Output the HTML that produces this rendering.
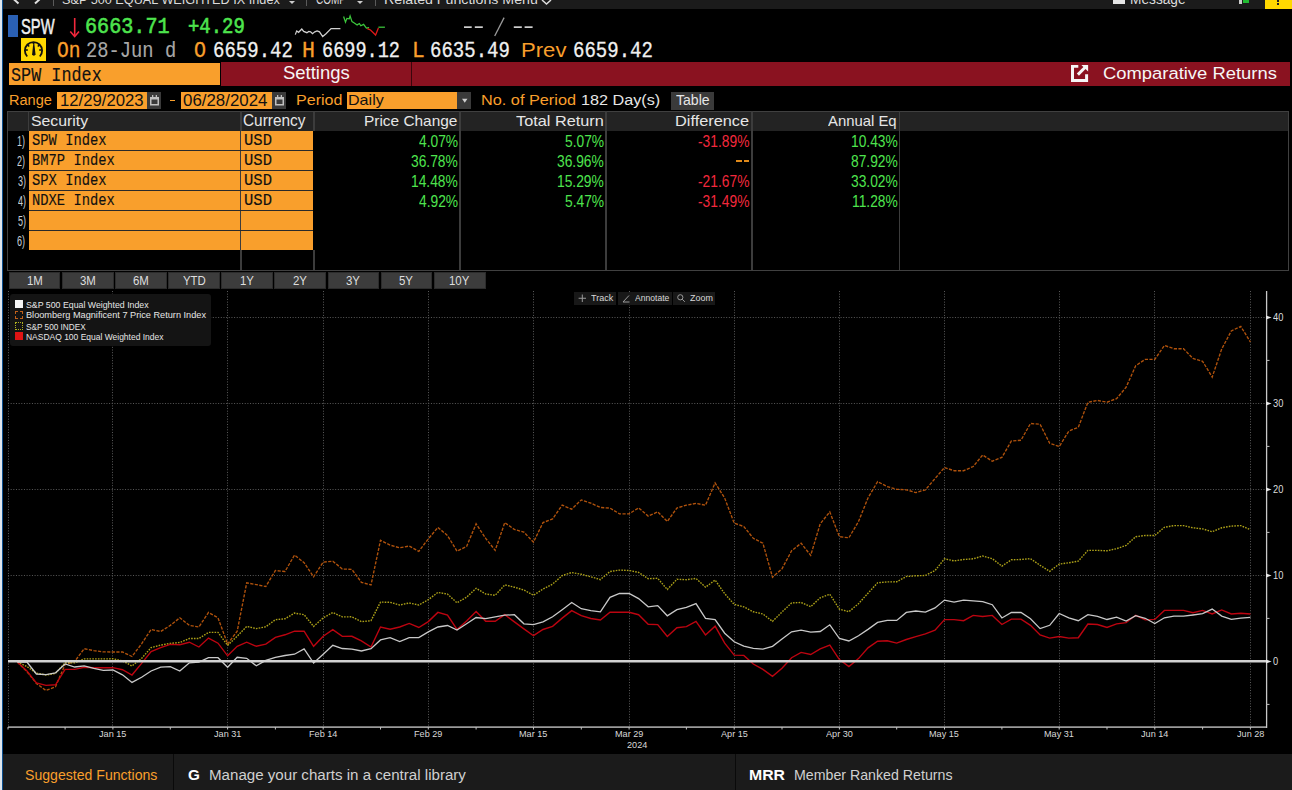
<!DOCTYPE html><html><head><meta charset="utf-8"><style>*{margin:0;padding:0;box-sizing:border-box}
html,body{width:1292px;height:790px;overflow:hidden;background:#000}
.a{position:absolute;white-space:nowrap}
.t{position:absolute;white-space:nowrap;transform-origin:0 0}
</style></head><body>
<div class="a" style="left:0px;top:0px;width:2px;height:790px;background:#dfe6ee;"></div>
<div class="a" style="left:2px;top:0px;width:1px;height:790px;background:#0c4f8f;"></div>
<div class="a" style="left:3px;top:0px;width:1289px;height:9px;background:#1b1b1b;"></div>
<svg class="a" style="left:0;top:0" width="60" height="9"><path d="M18.5,-7 L13,-1.5 L18.5,3.5" fill="none" stroke="#e0e0e0" stroke-width="2"/><path d="M35,-7 L40.5,-1.5 L35,3.5" fill="none" stroke="#e0e0e0" stroke-width="2"/></svg>
<div class="a" style="left:53px;top:0px;width:1px;height:6px;background:#5a5a5a;"></div>
<div class="a" style="left:306px;top:0px;width:1px;height:6px;background:#5a5a5a;"></div>
<div class="a" style="left:375px;top:0px;width:1px;height:6px;background:#5a5a5a;"></div>
<div class="t" style="left:62.40px;top:-7px;font:400 13.62px/13.62px 'Liberation Sans';color:#dcdcdc;transform:scaleX(0.9318);">S&amp;P 500 EQUAL WEIGHTED IX Index</div>
<div class="t" style="left:315.53px;top:-8px;font:400 14.22px/14.22px 'Liberation Sans';color:#dcdcdc;transform:scaleX(0.7004);">COMP</div>
<div class="t" style="left:383.89px;top:-7px;font:400 13.62px/13.62px 'Liberation Sans';color:#dcdcdc;transform:scaleX(1.0427);">Related Functions Menu</div>
<div class="t" style="left:1129.93px;top:-8px;font:400 14.22px/14.22px 'Liberation Sans';color:#dcdcdc;transform:scaleX(0.9639);">Message</div>
<svg class="a" style="left:0;top:0" width="1292" height="9"><path d="M289,1 L295,1 L292,4 Z" fill="#ccc"/><path d="M357,1 L363,1 L360,4 Z" fill="#ccc"/><path d="M542,0 L546.5,4 L551,0" fill="none" stroke="#ddd" stroke-width="1.5"/></svg>
<div class="a" style="left:1113px;top:0px;width:12px;height:4px;background:#e6e6e6;"></div>
<div class="a" style="left:1239px;top:0px;width:3px;height:3.5px;background:#ccc;"></div>
<div class="a" style="left:1243px;top:0px;width:6px;height:3px;background:#22bb33;"></div>
<div class="a" style="left:1265px;top:0px;width:27px;height:9px;background:#ffd800;"></div>
<div class="a" style="left:1276.5px;top:0px;width:2.5px;height:2px;background:#222;"></div>
<div class="a" style="left:1276.5px;top:3px;width:2.5px;height:1.5px;background:#222;"></div>
<div class="a" style="left:8px;top:15px;width:10px;height:22px;background:#2a60b4;"></div>
<div class="t" style="left:20.74px;top:15px;font:400 22.9px/22.9px 'Liberation Sans';color:#f0f0f0;transform:scaleX(0.6447);-webkit-text-stroke:0.5px #f0f0f0">SPW</div>
<svg class="a" style="left:60px;top:12px" width="25" height="30"><path d="M14.7,6 V23.5" stroke="#f2283c" stroke-width="1.6"/><path d="M10.3,19.5 L14.7,24.5 L19,19.5" fill="none" stroke="#f2283c" stroke-width="1.6"/></svg>
<div class="t" style="left:85.34px;top:16px;font:400 22.92px/22.92px 'Liberation Mono';color:#4ee44e;transform:scaleX(0.8788);-webkit-text-stroke:0.6px #4ee44e">6663.71</div>
<div class="t" style="left:188.31px;top:17px;font:400 21.88px/21.88px 'Liberation Mono';color:#4ee44e;transform:scaleX(0.8651);-webkit-text-stroke:0.6px #4ee44e">+4.29</div>
<svg class="a" style="left:455px;top:12px" width="90" height="28"><g fill="#cfcfcf"><rect x="9" y="14.3" width="7.7" height="1.7"/><rect x="19.8" y="14.3" width="8" height="1.7"/><rect x="58.8" y="14.3" width="8" height="1.7"/><rect x="69.6" y="14.3" width="8" height="1.7"/></g><path d="M39.7,24 L49.1,5.6" stroke="#9a9a9a" stroke-width="1.3"/></svg>
<svg class="a" style="left:0;top:0" width="400" height="40">
<polyline points="295.3,34.6 296.7,30.9 298.6,32.3 301.8,29.0 303.7,31.4 306.9,32.7 308.8,31.4 310.6,31.8 312.5,33.7 314.8,31.8 317.1,30.9 319.5,31.8 322.7,36.5 326.0,33.7 331.1,28.6 340.4,28.6" fill="none" stroke="#d0d0d0" stroke-width="1.25"/>
<polyline points="343.6,16.5 345.5,22.1 346.9,18.4 349.2,18.8 350.1,16.0 352.0,21.6 354.3,23.0 357.1,24.9 359.4,23.5 360.8,25.8 363.6,24.4 366.4,28.1 369.1,27.6" fill="none" stroke="#3cc83c" stroke-width="1.25"/>
<polyline points="367.3,28.6 370.5,30.0 373.8,33.2 375.6,35.1 378.4,28.1" fill="none" stroke="#e01818" stroke-width="1.3"/>
<polyline points="378.4,27.2 384.9,27.2" fill="none" stroke="#3cc83c" stroke-width="1.25"/>
</svg>
<div class="a" style="left:21px;top:38px;width:25px;height:22.5px;background:#ffd800;"></div>
<svg class="a" style="left:21px;top:38px" width="25" height="23"><path d="M6.2,18.5 A8.6,8.6 0 1 1 18.8,18.5" fill="none" stroke="#111" stroke-width="1.8"/><g stroke="#111" stroke-width="1.6"><path d="M4.3,12 H6.8"/><path d="M18.2,12 H20.7"/><path d="M6.5,6.8 L8.2,8.5"/><path d="M18.5,6.8 L16.8,8.5"/><path d="M12.5,4 V6"/></g><path d="M12.3,5.6 L13.3,5.6 L14.5,16.3 A1.75,1.75 0 0 1 11.1,16.3 Z" fill="#111"/></svg>
<div class="t" style="left:56.68px;top:41px;font:400 21.88px/21.88px 'Liberation Mono';color:#f99f2c;transform:scaleX(0.8937);-webkit-text-stroke:0.3px #f99f2c">On</div>
<div class="t" style="left:85.83px;top:41px;font:400 21.88px/21.88px 'Liberation Mono';color:#a8a8a8;transform:scaleX(0.8584);-webkit-text-stroke:0.15px #a8a8a8">28-Jun d</div>
<div class="t" style="left:193.66px;top:41px;font:400 22.18px/22.18px 'Liberation Mono';color:#f99f2c;transform:scaleX(0.9008);-webkit-text-stroke:0.3px #f99f2c">O</div>
<div class="t" style="left:212.61px;top:41px;font:400 22.03px/22.03px 'Liberation Mono';color:#f0f0f0;transform:scaleX(0.8635);-webkit-text-stroke:0.3px #f0f0f0">6659.42</div>
<div class="t" style="left:302.01px;top:41px;font:400 21.88px/21.88px 'Liberation Mono';color:#f99f2c;transform:scaleX(0.9885);-webkit-text-stroke:0.3px #f99f2c">H</div>
<div class="t" style="left:322.24px;top:41px;font:400 22.03px/22.03px 'Liberation Mono';color:#f0f0f0;transform:scaleX(0.8434);-webkit-text-stroke:0.3px #f0f0f0">6699.12</div>
<div class="t" style="left:411.68px;top:41px;font:400 21.88px/21.88px 'Liberation Mono';color:#f99f2c;transform:scaleX(0.9716);-webkit-text-stroke:0.3px #f99f2c">L</div>
<div class="t" style="left:430.01px;top:41px;font:400 22.03px/22.03px 'Liberation Mono';color:#f0f0f0;transform:scaleX(0.8635);-webkit-text-stroke:0.3px #f0f0f0">6635.49</div>
<div class="t" style="left:520.57px;top:40px;font:400 20.91px/20.91px 'Liberation Sans';color:#f99f2c;transform:scaleX(1.0567);">Prev</div>
<div class="t" style="left:572.81px;top:41px;font:400 22.03px/22.03px 'Liberation Mono';color:#f0f0f0;transform:scaleX(0.8646);-webkit-text-stroke:0.3px #f0f0f0">6659.42</div>
<div class="a" style="left:9px;top:63px;width:210.5px;height:21.6px;background:#f99f2c;"></div>
<div class="t" style="left:11.47px;top:66px;font:400 20.24px/20.24px 'Liberation Mono';color:#111;transform:scaleX(0.8302);-webkit-text-stroke:0.15px #111">SPW Index</div>
<div class="a" style="left:221px;top:62px;width:1068.5px;height:23.6px;background:#8a1220;"></div>
<div class="a" style="left:410.5px;top:62px;width:1.5px;height:23.6px;background:#3a060c;"></div>
<div class="t" style="left:282.92px;top:65px;font:400 17.84px/17.84px 'Liberation Sans';color:#f6f6f6;transform:scaleX(1.0357);">Settings</div>
<div class="t" style="left:1103.14px;top:65px;font:400 17.16px/17.16px 'Liberation Sans';color:#f6f6f6;transform:scaleX(1.0724);">Comparative Returns</div>
<svg class="a" style="left:1071px;top:65px" width="19" height="18"><path d="M7.3,1.25 H1.5 V15.4 H15.6 V9.3" fill="none" stroke="#f6f6f6" stroke-width="3" stroke-linejoin="miter"/><path d="M6.9,9.6 L14,2.5" stroke="#f6f6f6" stroke-width="3"/><path d="M10.1,-0.25 L17.1,-0.25 L17.1,6.6 Z" fill="#f6f6f6"/></svg>
<div class="t" style="left:9.46px;top:93px;font:400 14.93px/14.93px 'Liberation Sans';color:#f99f2c;transform:scaleX(0.9755);">Range</div>
<div class="a" style="left:57px;top:92px;width:90.2px;height:16.8px;background:#f99f2c;"></div>
<div class="t" style="left:59.65px;top:93px;font:400 16.78px/16.78px 'Liberation Sans';color:#111;transform:scaleX(0.9968);">12/29/2023</div>
<div class="a" style="left:147.2px;top:92px;width:14.1px;height:16.8px;background:#3a3a3a;"></div>
<div class="a" style="left:170.3px;top:99.8px;width:5.1px;height:1.6px;background:#f99f2c;"></div>
<div class="a" style="left:181.4px;top:92px;width:90.6px;height:16.8px;background:#f99f2c;"></div>
<div class="t" style="left:183.27px;top:93px;font:400 16.78px/16.78px 'Liberation Sans';color:#111;transform:scaleX(1.0066);">06/28/2024</div>
<div class="a" style="left:272px;top:92px;width:13.5px;height:16.8px;background:#3a3a3a;"></div>
<svg class="a" style="left:149.9px;top:94.5px" width="10" height="11"><rect x="0.75" y="2.75" width="7.5" height="7" fill="none" stroke="#c0c0c0" stroke-width="1.5"/><rect x="0" y="2" width="9" height="2.5" fill="#c0c0c0"/><rect x="2" y="0" width="1.3" height="2.5" fill="#c0c0c0"/><rect x="5.7" y="0" width="1.3" height="2.5" fill="#c0c0c0"/></svg>
<svg class="a" style="left:274.5px;top:94.5px" width="10" height="11"><rect x="0.75" y="2.75" width="7.5" height="7" fill="none" stroke="#c0c0c0" stroke-width="1.5"/><rect x="0" y="2" width="9" height="2.5" fill="#c0c0c0"/><rect x="2" y="0" width="1.3" height="2.5" fill="#c0c0c0"/><rect x="5.7" y="0" width="1.3" height="2.5" fill="#c0c0c0"/></svg>
<div class="t" style="left:296.34px;top:92px;font:400 15.11px/15.11px 'Liberation Sans';color:#f99f2c;transform:scaleX(1.0633);">Period</div>
<div class="a" style="left:347.4px;top:92px;width:109.8px;height:16.9px;background:#f99f2c;"></div>
<div class="t" style="left:348.34px;top:93px;font:400 14.57px/14.57px 'Liberation Sans';color:#111;transform:scaleX(1.1041);">Daily</div>
<div class="a" style="left:457.2px;top:92px;width:14.1px;height:16.9px;background:#3a3a3a;"></div>
<svg class="a" style="left:461px;top:98px" width="8" height="6"><path d="M1,0.8 L6.5,0.8 L3.75,4.7 Z" fill="#d0d0d0"/></svg>
<div class="t" style="left:481.43px;top:93px;font:400 14.43px/14.43px 'Liberation Sans';color:#f99f2c;transform:scaleX(1.1287);">No. of Period</div>
<div class="t" style="left:581.39px;top:92px;font:400 15.08px/15.08px 'Liberation Sans';color:#e6e6e6;transform:scaleX(1.0749);">182 Day(s)</div>
<div class="a" style="left:670.8px;top:91.9px;width:43.2px;height:17.8px;background:#3a3a3a;"></div>
<div class="t" style="left:675.98px;top:94px;font:400 13.89px/13.89px 'Liberation Sans';color:#e6e6e6;transform:scaleX(1.0147);">Table</div>
<div class="a" style="left:7px;top:111px;width:1282px;height:160px;background:transparent;border:1px solid #404040"></div>
<div class="a" style="left:8px;top:112px;width:1280px;height:19px;background:#232323;"></div>
<div class="a" style="left:28px;top:112px;width:1.2px;height:19px;background:#3c3c3c;"></div>
<div class="a" style="left:240px;top:111px;width:1.5px;height:159px;background:#3c3c3c;"></div>
<div class="a" style="left:459px;top:111px;width:1.5px;height:159px;background:#3c3c3c;"></div>
<div class="a" style="left:605px;top:111px;width:1.5px;height:159px;background:#3c3c3c;"></div>
<div class="a" style="left:751px;top:111px;width:1.5px;height:159px;background:#3c3c3c;"></div>
<div class="a" style="left:898.5px;top:111px;width:1.5px;height:159px;background:#3c3c3c;"></div>
<div class="a" style="left:313px;top:112px;width:1.5px;height:19px;background:#3c3c3c;"></div>
<div class="a" style="left:313px;top:250px;width:1.5px;height:20px;background:#3c3c3c;"></div>
<div class="t" style="left:30.61px;top:113px;font:400 15.11px/15.11px 'Liberation Sans';color:#e6e6e6;transform:scaleX(1.0475);">Security</div>
<div class="t" style="left:242.68px;top:113px;font:400 15.79px/15.79px 'Liberation Sans';color:#e6e6e6;transform:scaleX(0.9747);">Currency</div>
<div class="t" style="left:363.90px;top:113px;font:400 15.11px/15.11px 'Liberation Sans';color:#e6e6e6;transform:scaleX(1.0202);">Price Change</div>
<div class="t" style="left:515.75px;top:113px;font:400 15.11px/15.11px 'Liberation Sans';color:#e6e6e6;transform:scaleX(1.0770);">Total Return</div>
<div class="t" style="left:675.32px;top:113px;font:400 15.11px/15.11px 'Liberation Sans';color:#e6e6e6;transform:scaleX(1.0805);">Difference</div>
<div class="t" style="left:828.30px;top:113px;font:400 15.11px/15.11px 'Liberation Sans';color:#e6e6e6;transform:scaleX(0.9840);">Annual Eq</div>
<div class="a" style="left:29px;top:131.3px;width:211px;height:18.5px;background:#f99f2c;"></div>
<div class="a" style="left:241.3px;top:131.3px;width:72px;height:18.5px;background:#f99f2c;"></div>
<div class="a" style="left:29px;top:149.8px;width:284.3px;height:1.5px;background:#2a2a2a;"></div>
<div class="a" style="left:29px;top:151.3px;width:211px;height:18.5px;background:#f99f2c;"></div>
<div class="a" style="left:241.3px;top:151.3px;width:72px;height:18.5px;background:#f99f2c;"></div>
<div class="a" style="left:29px;top:169.8px;width:284.3px;height:1.5px;background:#2a2a2a;"></div>
<div class="a" style="left:29px;top:171.3px;width:211px;height:18.5px;background:#f99f2c;"></div>
<div class="a" style="left:241.3px;top:171.3px;width:72px;height:18.5px;background:#f99f2c;"></div>
<div class="a" style="left:29px;top:189.8px;width:284.3px;height:1.5px;background:#2a2a2a;"></div>
<div class="a" style="left:29px;top:191.3px;width:211px;height:18.5px;background:#f99f2c;"></div>
<div class="a" style="left:241.3px;top:191.3px;width:72px;height:18.5px;background:#f99f2c;"></div>
<div class="a" style="left:29px;top:209.8px;width:284.3px;height:1.5px;background:#2a2a2a;"></div>
<div class="a" style="left:29px;top:211.3px;width:211px;height:18.5px;background:#f99f2c;"></div>
<div class="a" style="left:241.3px;top:211.3px;width:72px;height:18.5px;background:#f99f2c;"></div>
<div class="a" style="left:29px;top:229.8px;width:284.3px;height:1.5px;background:#2a2a2a;"></div>
<div class="a" style="left:29px;top:231.3px;width:211px;height:18.5px;background:#f99f2c;"></div>
<div class="a" style="left:241.3px;top:231.3px;width:72px;height:18.5px;background:#f99f2c;"></div>
<div class="t" style="left:17.34px;top:134px;font:400 14.57px/14.57px 'Liberation Sans';color:#c8d0d8;transform:scaleX(0.6200);">1)</div>
<div class="t" style="left:32.17px;top:132px;font:400 17.41px/17.41px 'Liberation Mono';color:#111;transform:scaleX(0.7933);-webkit-text-stroke:0.15px #111">SPW Index</div>
<div class="t" style="left:243.53px;top:132px;font:400 17.41px/17.41px 'Liberation Mono';color:#111;transform:scaleX(0.8917);-webkit-text-stroke:0.15px #111">USD</div>
<div class="t" style="left:419.05px;top:134px;font:400 16.64px/16.64px 'Liberation Sans';color:#4ee44e;transform:scaleX(0.8300);">4.07%</div>
<div class="t" style="left:564.85px;top:134px;font:400 16.64px/16.64px 'Liberation Sans';color:#4ee44e;transform:scaleX(0.8300);">5.07%</div>
<div class="t" style="left:698.47px;top:134px;font:400 16.64px/16.64px 'Liberation Sans';color:#f2283c;transform:scaleX(0.8300);">-31.89%</div>
<div class="t" style="left:850.67px;top:134px;font:400 16.64px/16.64px 'Liberation Sans';color:#4ee44e;transform:scaleX(0.8300);">10.43%</div>
<div class="t" style="left:17.48px;top:154px;font:400 14.57px/14.57px 'Liberation Sans';color:#c8d0d8;transform:scaleX(0.6200);">2)</div>
<div class="t" style="left:31.52px;top:152px;font:400 17.41px/17.41px 'Liberation Mono';color:#111;transform:scaleX(0.7933);-webkit-text-stroke:0.15px #111">BM7P Index</div>
<div class="t" style="left:243.53px;top:152px;font:400 17.41px/17.41px 'Liberation Mono';color:#111;transform:scaleX(0.8917);-webkit-text-stroke:0.15px #111">USD</div>
<div class="t" style="left:411.37px;top:154px;font:400 16.64px/16.64px 'Liberation Sans';color:#4ee44e;transform:scaleX(0.8300);">36.78%</div>
<div class="t" style="left:557.17px;top:154px;font:400 16.64px/16.64px 'Liberation Sans';color:#4ee44e;transform:scaleX(0.8300);">36.96%</div>
<div class="a" style="left:736px;top:160.2px;width:5.5px;height:1.6px;background:#e08a1a;"></div>
<div class="a" style="left:743.5px;top:160.2px;width:5.5px;height:1.6px;background:#e08a1a;"></div>
<div class="t" style="left:850.67px;top:154px;font:400 16.64px/16.64px 'Liberation Sans';color:#4ee44e;transform:scaleX(0.8300);">87.92%</div>
<div class="t" style="left:17.62px;top:174px;font:400 14.57px/14.57px 'Liberation Sans';color:#c8d0d8;transform:scaleX(0.6200);">3)</div>
<div class="t" style="left:32.17px;top:172px;font:400 17.41px/17.41px 'Liberation Mono';color:#111;transform:scaleX(0.7933);-webkit-text-stroke:0.15px #111">SPX Index</div>
<div class="t" style="left:243.53px;top:172px;font:400 17.41px/17.41px 'Liberation Mono';color:#111;transform:scaleX(0.8917);-webkit-text-stroke:0.15px #111">USD</div>
<div class="t" style="left:411.37px;top:174px;font:400 16.64px/16.64px 'Liberation Sans';color:#4ee44e;transform:scaleX(0.8300);">14.48%</div>
<div class="t" style="left:557.17px;top:174px;font:400 16.64px/16.64px 'Liberation Sans';color:#4ee44e;transform:scaleX(0.8300);">15.29%</div>
<div class="t" style="left:698.47px;top:174px;font:400 16.64px/16.64px 'Liberation Sans';color:#f2283c;transform:scaleX(0.8300);">-21.67%</div>
<div class="t" style="left:850.67px;top:174px;font:400 16.64px/16.64px 'Liberation Sans';color:#4ee44e;transform:scaleX(0.8300);">33.02%</div>
<div class="t" style="left:17.76px;top:194px;font:400 14.57px/14.57px 'Liberation Sans';color:#c8d0d8;transform:scaleX(0.6200);">4)</div>
<div class="t" style="left:31.52px;top:192px;font:400 17.41px/17.41px 'Liberation Mono';color:#111;transform:scaleX(0.7933);-webkit-text-stroke:0.15px #111">NDXE Index</div>
<div class="t" style="left:243.53px;top:192px;font:400 17.41px/17.41px 'Liberation Mono';color:#111;transform:scaleX(0.8917);-webkit-text-stroke:0.15px #111">USD</div>
<div class="t" style="left:419.05px;top:194px;font:400 16.64px/16.64px 'Liberation Sans';color:#4ee44e;transform:scaleX(0.8300);">4.92%</div>
<div class="t" style="left:564.85px;top:194px;font:400 16.64px/16.64px 'Liberation Sans';color:#4ee44e;transform:scaleX(0.8300);">5.47%</div>
<div class="t" style="left:698.47px;top:194px;font:400 16.64px/16.64px 'Liberation Sans';color:#f2283c;transform:scaleX(0.8300);">-31.49%</div>
<div class="t" style="left:851.69px;top:194px;font:400 16.64px/16.64px 'Liberation Sans';color:#4ee44e;transform:scaleX(0.8300);">11.28%</div>
<div class="t" style="left:17.62px;top:214px;font:400 14.57px/14.57px 'Liberation Sans';color:#c8d0d8;transform:scaleX(0.6200);">5)</div>
<div class="t" style="left:17.48px;top:234px;font:400 14.57px/14.57px 'Liberation Sans';color:#c8d0d8;transform:scaleX(0.6200);">6)</div>
<div class="a" style="left:8.7px;top:272.1px;width:51.8px;height:16.7px;background:#3c3c3c;border:1px solid #2c2c2c"></div>
<div class="a" style="left:61.8px;top:272.1px;width:51.8px;height:16.7px;background:#3c3c3c;border:1px solid #2c2c2c"></div>
<div class="a" style="left:115.0px;top:272.1px;width:51.8px;height:16.7px;background:#3c3c3c;border:1px solid #2c2c2c"></div>
<div class="a" style="left:168.1px;top:272.1px;width:51.8px;height:16.7px;background:#3c3c3c;border:1px solid #2c2c2c"></div>
<div class="a" style="left:221.3px;top:272.1px;width:51.8px;height:16.7px;background:#3c3c3c;border:1px solid #2c2c2c"></div>
<div class="a" style="left:274.4px;top:272.1px;width:51.8px;height:16.7px;background:#3c3c3c;border:1px solid #2c2c2c"></div>
<div class="a" style="left:327.5px;top:272.1px;width:51.8px;height:16.7px;background:#3c3c3c;border:1px solid #2c2c2c"></div>
<div class="a" style="left:380.7px;top:272.1px;width:51.8px;height:16.7px;background:#3c3c3c;border:1px solid #2c2c2c"></div>
<div class="a" style="left:433.8px;top:272.1px;width:51.8px;height:16.7px;background:#3c3c3c;border:1px solid #2c2c2c"></div>
<svg class="a" style="left:0;top:0" width="1292" height="790">
<line x1="8" y1="317.5" x2="1266" y2="317.5" stroke="#5a5a5a" stroke-width="1" stroke-dasharray="1,1.66"/>
<line x1="8" y1="403.5" x2="1266" y2="403.5" stroke="#5a5a5a" stroke-width="1" stroke-dasharray="1,1.66"/>
<line x1="8" y1="489.5" x2="1266" y2="489.5" stroke="#5a5a5a" stroke-width="1" stroke-dasharray="1,1.66"/>
<line x1="8" y1="575.5" x2="1266" y2="575.5" stroke="#5a5a5a" stroke-width="1" stroke-dasharray="1,1.66"/>
<line x1="8.5" y1="291" x2="8.5" y2="726" stroke="#5a5a5a" stroke-width="1" stroke-dasharray="1,1.66"/>
<line x1="112.5" y1="291" x2="112.5" y2="726" stroke="#5a5a5a" stroke-width="1" stroke-dasharray="1,1.66"/>
<line x1="227.5" y1="291" x2="227.5" y2="726" stroke="#5a5a5a" stroke-width="1" stroke-dasharray="1,1.66"/>
<line x1="323.5" y1="291" x2="323.5" y2="726" stroke="#5a5a5a" stroke-width="1" stroke-dasharray="1,1.66"/>
<line x1="428.5" y1="291" x2="428.5" y2="726" stroke="#5a5a5a" stroke-width="1" stroke-dasharray="1,1.66"/>
<line x1="533.5" y1="291" x2="533.5" y2="726" stroke="#5a5a5a" stroke-width="1" stroke-dasharray="1,1.66"/>
<line x1="629.5" y1="291" x2="629.5" y2="726" stroke="#5a5a5a" stroke-width="1" stroke-dasharray="1,1.66"/>
<line x1="734.5" y1="291" x2="734.5" y2="726" stroke="#5a5a5a" stroke-width="1" stroke-dasharray="1,1.66"/>
<line x1="839.5" y1="291" x2="839.5" y2="726" stroke="#5a5a5a" stroke-width="1" stroke-dasharray="1,1.66"/>
<line x1="944.5" y1="291" x2="944.5" y2="726" stroke="#5a5a5a" stroke-width="1" stroke-dasharray="1,1.66"/>
<line x1="1059.5" y1="291" x2="1059.5" y2="726" stroke="#5a5a5a" stroke-width="1" stroke-dasharray="1,1.66"/>
<line x1="1154.5" y1="291" x2="1154.5" y2="726" stroke="#5a5a5a" stroke-width="1" stroke-dasharray="1,1.66"/>
<line x1="1250.5" y1="291" x2="1250.5" y2="726" stroke="#5a5a5a" stroke-width="1" stroke-dasharray="1,1.66"/>
<polyline points="17.3,662.0 26.9,671.5 36.4,683.5 46.0,690.5 55.5,686.7 65.1,664.6 74.7,661.4 84.2,648.7 93.8,650.6 103.3,651.9 112.9,652.0 122.5,652.0 132.0,656.5 141.6,643.8 151.1,629.5 160.7,631.5 170.3,625.4 179.8,617.8 189.4,625.4 198.9,627.0 208.5,612.5 218.0,617.8 227.6,644.0 237.2,631.2 246.7,582.9 256.3,584.6 265.8,586.6 275.4,570.5 285.0,571.5 294.5,555.1 304.1,562.7 313.6,576.8 323.2,562.1 332.8,561.2 342.3,569.0 351.9,569.4 361.4,582.3 371.0,585.0 380.5,540.3 390.1,545.1 399.7,547.8 409.2,546.0 418.8,551.3 428.3,538.9 437.9,527.4 447.5,535.5 457.0,551.2 466.6,546.4 476.1,523.8 485.7,538.4 495.2,550.3 504.8,522.6 514.4,529.5 523.9,532.1 533.5,542.2 543.0,522.6 552.6,518.9 562.2,505.1 571.7,509.2 581.3,499.9 590.8,503.1 600.4,507.5 610.0,508.1 619.5,513.8 629.1,513.8 638.6,507.9 648.2,516.1 657.7,511.9 667.3,521.5 676.9,508.0 686.4,505.2 696.0,503.4 705.5,505.2 715.1,482.9 724.7,498.1 734.2,523.2 743.8,526.5 753.3,538.3 762.9,543.2 772.5,577.2 782.0,568.8 791.6,550.8 801.1,543.2 810.7,555.4 820.2,523.8 829.8,511.9 839.4,536.7 848.9,537.8 858.5,521.5 868.0,498.0 877.6,481.6 887.2,486.6 896.7,489.3 906.3,489.8 915.8,492.6 925.4,489.8 935.0,478.6 944.5,467.5 954.1,470.7 963.6,470.7 973.2,466.5 982.7,455.0 992.3,461.2 1001.9,457.4 1011.4,441.0 1021.0,440.2 1030.5,423.5 1040.1,424.3 1049.7,443.3 1059.2,446.6 1068.8,431.1 1078.3,427.3 1087.9,402.3 1097.5,400.4 1107.0,402.2 1116.6,398.6 1126.1,387.3 1135.7,365.7 1145.2,359.4 1154.8,359.4 1164.4,345.5 1173.9,348.7 1183.5,348.7 1193.0,358.5 1202.6,361.3 1212.2,377.1 1221.7,349.0 1231.3,330.9 1240.8,326.4 1250.4,342.0" fill="none" stroke="#b0520c" stroke-width="1.35" stroke-dasharray="3.2,1.4"/>
<polyline points="17.3,662.0 26.9,666.5 36.4,673.2 46.0,675.0 55.5,673.4 65.1,662.7 74.7,662.9 84.2,658.9 93.8,658.9 103.3,658.9 112.9,658.8 122.5,660.9 132.0,666.0 141.6,658.4 151.1,647.6 160.7,645.1 170.3,643.4 179.8,642.5 189.4,638.5 198.9,638.5 208.5,632.4 218.0,632.4 227.6,645.4 237.2,636.2 246.7,626.4 256.3,628.6 265.8,626.8 275.4,619.7 285.0,618.8 294.5,613.1 304.1,614.7 313.6,626.4 323.2,617.9 332.8,612.5 342.3,616.9 351.9,616.8 361.4,621.6 371.0,620.7 380.5,602.1 390.1,602.3 399.7,605.0 409.2,603.0 418.8,605.0 428.3,599.7 437.9,592.4 447.5,594.1 457.0,602.8 466.6,597.2 476.1,588.3 485.7,594.0 495.2,595.3 504.8,584.9 514.4,587.2 523.9,590.0 533.5,595.3 543.0,589.0 552.6,584.1 562.2,575.6 571.7,572.5 581.3,574.3 590.8,576.8 600.4,579.6 610.0,571.5 619.5,570.1 629.1,570.5 638.6,572.4 648.2,578.7 657.7,578.3 667.3,589.5 676.9,579.3 686.4,579.7 696.0,578.4 705.5,587.2 715.1,580.1 724.7,593.7 734.2,604.4 743.8,606.9 753.3,611.8 762.9,614.0 772.5,621.4 782.0,612.0 791.6,602.9 801.1,602.5 810.7,606.7 820.2,597.8 829.8,594.2 839.4,609.2 848.9,611.7 858.5,603.7 868.0,593.2 877.6,582.8 887.2,581.9 896.7,581.8 906.3,576.5 915.8,575.8 925.4,575.5 935.0,570.6 944.5,558.8 954.1,560.9 963.6,559.5 973.2,558.8 982.7,556.0 992.3,558.7 1001.9,566.1 1011.4,559.8 1021.0,559.5 1030.5,558.7 1040.1,565.3 1049.7,571.3 1059.2,564.1 1068.8,562.8 1078.3,561.1 1087.9,550.4 1097.5,550.4 1107.0,550.8 1116.6,548.7 1126.1,545.4 1135.7,536.7 1145.2,535.5 1154.8,535.5 1164.4,527.3 1173.9,525.6 1183.5,525.6 1193.0,527.8 1202.6,528.9 1212.2,531.7 1221.7,527.8 1231.3,526.1 1240.8,525.6 1250.4,529.7" fill="none" stroke="#aca018" stroke-width="1.4" stroke-dasharray="1.6,1.2"/>
<polyline points="17.3,662.0 26.9,670.9 36.4,682.9 46.0,685.4 55.5,684.8 65.1,669.4 74.7,669.4 84.2,667.3 93.8,667.7 103.3,667.7 112.9,667.6 122.5,669.7 132.0,675.0 141.6,663.4 151.1,651.6 160.7,647.6 170.3,644.4 179.8,644.7 189.4,642.2 198.9,647.0 208.5,638.1 218.0,643.2 227.6,655.8 237.2,646.3 246.7,642.2 256.3,646.3 265.8,644.1 275.4,637.4 285.0,634.8 294.5,631.2 304.1,631.2 313.6,646.3 323.2,636.2 332.8,629.6 342.3,636.4 351.9,636.3 361.4,640.8 371.0,647.0 380.5,627.0 390.1,629.2 399.7,627.0 409.2,623.4 418.8,627.5 428.3,621.6 437.9,612.4 447.5,615.2 457.0,629.5 466.6,620.9 476.1,611.4 485.7,621.3 495.2,621.3 504.8,614.7 514.4,621.9 523.9,628.9 533.5,635.7 543.0,629.5 552.6,626.4 562.2,618.1 571.7,610.7 581.3,615.7 590.8,618.5 600.4,620.0 610.0,612.3 619.5,612.3 629.1,612.3 638.6,614.7 648.2,624.2 657.7,624.6 667.3,636.5 676.9,627.7 686.4,626.6 696.0,621.4 705.5,634.9 715.1,626.2 724.7,643.1 734.2,655.1 743.8,655.4 753.3,664.0 762.9,669.4 772.5,676.4 782.0,668.3 791.6,657.7 801.1,652.4 810.7,654.5 820.2,648.9 829.8,645.1 839.4,659.6 848.9,666.6 858.5,658.6 868.0,647.9 877.6,641.2 887.2,640.7 896.7,643.1 906.3,639.5 915.8,636.7 925.4,633.9 935.0,630.2 944.5,619.6 954.1,619.6 963.6,620.7 973.2,615.4 982.7,616.5 992.3,615.4 1001.9,624.5 1011.4,619.1 1021.0,619.1 1030.5,625.3 1040.1,634.9 1049.7,638.1 1059.2,636.5 1068.8,638.1 1078.3,637.7 1087.9,624.0 1097.5,624.5 1107.0,627.5 1116.6,623.9 1126.1,622.7 1135.7,615.3 1145.2,619.9 1154.8,619.4 1164.4,610.4 1173.9,610.4 1183.5,610.4 1193.0,612.8 1202.6,610.4 1212.2,614.0 1221.7,609.9 1231.3,614.0 1240.8,613.3 1250.4,614.0" fill="none" stroke="#bc0410" stroke-width="1.4"/>
<polyline points="17.3,662.0 26.9,662.0 36.4,674.0 46.0,674.7 55.5,672.8 65.1,664.0 74.7,667.0 84.2,665.8 93.8,668.4 103.3,670.3 112.9,670.0 122.5,674.8 132.0,682.4 141.6,677.3 151.1,671.0 160.7,667.2 170.3,666.6 179.8,671.0 189.4,662.8 198.9,662.2 208.5,657.7 218.0,657.7 227.6,667.3 237.2,657.3 246.7,658.3 256.3,665.8 265.8,660.4 275.4,657.3 285.0,655.5 294.5,654.2 304.1,648.9 313.6,663.1 323.2,654.2 332.8,645.3 342.3,648.5 351.9,649.1 361.4,651.0 371.0,648.7 380.5,639.9 390.1,637.6 399.7,641.6 409.2,637.6 418.8,637.6 428.3,631.9 437.9,627.0 447.5,625.5 457.0,630.0 466.6,623.8 476.1,617.5 485.7,618.7 495.2,616.8 504.8,615.2 514.4,614.7 523.9,623.8 533.5,624.7 543.0,621.9 552.6,616.7 562.2,609.7 571.7,602.5 581.3,608.7 590.8,610.6 600.4,611.9 610.0,597.3 619.5,593.5 629.1,593.5 638.6,598.6 648.2,606.8 657.7,605.6 667.3,615.8 676.9,609.7 686.4,607.4 696.0,603.6 705.5,618.4 715.1,619.6 724.7,633.2 734.2,641.8 743.8,646.1 753.3,648.4 762.9,649.2 772.5,646.3 782.0,639.0 791.6,631.8 801.1,630.1 810.7,632.2 820.2,631.5 829.8,624.8 839.4,638.5 848.9,641.0 858.5,635.7 868.0,629.4 877.6,622.4 887.2,620.4 896.7,620.4 906.3,612.4 915.8,611.0 925.4,612.1 935.0,607.9 944.5,600.1 954.1,602.2 963.6,600.1 973.2,600.8 982.7,601.7 992.3,604.7 1001.9,618.0 1011.4,612.5 1021.0,612.5 1030.5,618.7 1040.1,628.6 1049.7,625.3 1059.2,613.5 1068.8,617.9 1078.3,620.7 1087.9,614.6 1097.5,616.3 1107.0,619.5 1116.6,617.2 1126.1,621.1 1135.7,615.6 1145.2,618.3 1154.8,623.5 1164.4,617.8 1173.9,616.1 1183.5,616.1 1193.0,615.0 1202.6,613.7 1212.2,609.1 1221.7,616.1 1231.3,619.4 1240.8,618.1 1250.4,617.3" fill="none" stroke="#c8c8c8" stroke-width="1.3"/>
<line x1="8" y1="661.3" x2="1266" y2="661.3" stroke="#d2d2d2" stroke-width="2.6"/>
<line x1="8" y1="727.1" x2="1267" y2="727.1" stroke="#9a9a9a" stroke-width="1.8"/>
<line x1="1266.6" y1="291" x2="1266.6" y2="728" stroke="#c8c8c8" stroke-width="1.3"/>
<path d="M1266,315.4 L1271.6,317.4 L1266,319.4 Z" fill="#e8e8e8"/>
<path d="M1266,401.4 L1271.6,403.4 L1266,405.4 Z" fill="#e8e8e8"/>
<path d="M1266,487.4 L1271.6,489.4 L1266,491.4 Z" fill="#e8e8e8"/>
<path d="M1266,573.4 L1271.6,575.4 L1266,577.4 Z" fill="#e8e8e8"/>
<path d="M1266,659.4 L1271.6,661.4 L1266,663.4 Z" fill="#e8e8e8"/>
<line x1="1266" y1="360.4" x2="1269.5" y2="360.4" stroke="#c0c0c0" stroke-width="1"/>
<line x1="1266" y1="446.4" x2="1269.5" y2="446.4" stroke="#c0c0c0" stroke-width="1"/>
<line x1="1266" y1="532.4" x2="1269.5" y2="532.4" stroke="#c0c0c0" stroke-width="1"/>
<line x1="1266" y1="618.4" x2="1269.5" y2="618.4" stroke="#c0c0c0" stroke-width="1"/>
<line x1="1266" y1="704.4" x2="1269.5" y2="704.4" stroke="#c0c0c0" stroke-width="1"/>
<line x1="8.0" y1="727" x2="8.0" y2="729.5" stroke="#c0c0c0" stroke-width="1"/>
<line x1="112.9" y1="727" x2="112.9" y2="729.5" stroke="#c0c0c0" stroke-width="1"/>
<line x1="227.6" y1="727" x2="227.6" y2="729.5" stroke="#c0c0c0" stroke-width="1"/>
<line x1="323.2" y1="727" x2="323.2" y2="729.5" stroke="#c0c0c0" stroke-width="1"/>
<line x1="428.3" y1="727" x2="428.3" y2="729.5" stroke="#c0c0c0" stroke-width="1"/>
<line x1="533.5" y1="727" x2="533.5" y2="729.5" stroke="#c0c0c0" stroke-width="1"/>
<line x1="629.1" y1="727" x2="629.1" y2="729.5" stroke="#c0c0c0" stroke-width="1"/>
<line x1="734.2" y1="727" x2="734.2" y2="729.5" stroke="#c0c0c0" stroke-width="1"/>
<line x1="839.4" y1="727" x2="839.4" y2="729.5" stroke="#c0c0c0" stroke-width="1"/>
<line x1="944.5" y1="727" x2="944.5" y2="729.5" stroke="#c0c0c0" stroke-width="1"/>
<line x1="1059.2" y1="727" x2="1059.2" y2="729.5" stroke="#c0c0c0" stroke-width="1"/>
<line x1="1154.8" y1="727" x2="1154.8" y2="729.5" stroke="#c0c0c0" stroke-width="1"/>
<line x1="1250.4" y1="727" x2="1250.4" y2="729.5" stroke="#c0c0c0" stroke-width="1"/>
<line x1="170.3" y1="727" x2="170.3" y2="729.5" stroke="#c0c0c0" stroke-width="1"/>
<line x1="275.4" y1="727" x2="275.4" y2="729.5" stroke="#c0c0c0" stroke-width="1"/>
<line x1="380.5" y1="727" x2="380.5" y2="729.5" stroke="#c0c0c0" stroke-width="1"/>
<line x1="476.1" y1="727" x2="476.1" y2="729.5" stroke="#c0c0c0" stroke-width="1"/>
<line x1="581.3" y1="727" x2="581.3" y2="729.5" stroke="#c0c0c0" stroke-width="1"/>
<line x1="686.4" y1="727" x2="686.4" y2="729.5" stroke="#c0c0c0" stroke-width="1"/>
<line x1="782.0" y1="727" x2="782.0" y2="729.5" stroke="#c0c0c0" stroke-width="1"/>
<line x1="896.7" y1="727" x2="896.7" y2="729.5" stroke="#c0c0c0" stroke-width="1"/>
<line x1="1001.9" y1="727" x2="1001.9" y2="729.5" stroke="#c0c0c0" stroke-width="1"/>
<line x1="1107.0" y1="727" x2="1107.0" y2="729.5" stroke="#c0c0c0" stroke-width="1"/>
<line x1="1202.6" y1="727" x2="1202.6" y2="729.5" stroke="#c0c0c0" stroke-width="1"/>
<line x1="65.1" y1="727" x2="65.1" y2="729.5" stroke="#c0c0c0" stroke-width="1"/>
</svg>
<div class="t" style="left:26.68px;top:275px;font:400 12.37px/12.37px 'Liberation Sans';color:#dedede;transform:scaleX(0.9244);">1M</div>
<div class="t" style="left:80.00px;top:275px;font:400 12.37px/12.37px 'Liberation Sans';color:#dedede;transform:scaleX(0.9244);">3M</div>
<div class="t" style="left:133.05px;top:275px;font:400 12.37px/12.37px 'Liberation Sans';color:#dedede;transform:scaleX(0.9244);">6M</div>
<div class="t" style="left:182.69px;top:275px;font:400 12.37px/12.37px 'Liberation Sans';color:#dedede;transform:scaleX(0.9244);">YTD</div>
<div class="t" style="left:239.87px;top:275px;font:400 12.37px/12.37px 'Liberation Sans';color:#dedede;transform:scaleX(0.9244);">1Y</div>
<div class="t" style="left:293.10px;top:275px;font:400 12.37px/12.37px 'Liberation Sans';color:#dedede;transform:scaleX(0.9244);">2Y</div>
<div class="t" style="left:346.33px;top:275px;font:400 12.37px/12.37px 'Liberation Sans';color:#dedede;transform:scaleX(0.9244);">3Y</div>
<div class="t" style="left:399.47px;top:275px;font:400 12.37px/12.37px 'Liberation Sans';color:#dedede;transform:scaleX(0.9244);">5Y</div>
<div class="t" style="left:449.25px;top:275px;font:400 12.37px/12.37px 'Liberation Sans';color:#dedede;transform:scaleX(0.9244);">10Y</div>
<div class="t" style="left:99.31px;top:729px;font:400 9.81px/9.81px 'Liberation Sans';color:#d8d8d8;transform:scaleX(0.9304);">Jan 15</div>
<div class="t" style="left:214.01px;top:729px;font:400 9.81px/9.81px 'Liberation Sans';color:#d8d8d8;transform:scaleX(0.9304);">Jan 31</div>
<div class="t" style="left:308.74px;top:729px;font:400 9.81px/9.81px 'Liberation Sans';color:#d8d8d8;transform:scaleX(0.9304);">Feb 14</div>
<div class="t" style="left:413.95px;top:729px;font:400 9.81px/9.81px 'Liberation Sans';color:#d8d8d8;transform:scaleX(0.9304);">Feb 29</div>
<div class="t" style="left:519.11px;top:729px;font:400 9.81px/9.81px 'Liberation Sans';color:#d8d8d8;transform:scaleX(0.9304);">Mar 15</div>
<div class="t" style="left:614.69px;top:729px;font:400 9.81px/9.81px 'Liberation Sans';color:#d8d8d8;transform:scaleX(0.9304);">Mar 29</div>
<div class="t" style="left:720.96px;top:729px;font:400 9.81px/9.81px 'Liberation Sans';color:#d8d8d8;transform:scaleX(0.9304);">Apr 15</div>
<div class="t" style="left:826.03px;top:729px;font:400 9.81px/9.81px 'Liberation Sans';color:#d8d8d8;transform:scaleX(0.9304);">Apr 30</div>
<div class="t" style="left:929.37px;top:729px;font:400 9.81px/9.81px 'Liberation Sans';color:#d8d8d8;transform:scaleX(0.9304);">May 15</div>
<div class="t" style="left:1044.08px;top:729px;font:400 9.81px/9.81px 'Liberation Sans';color:#d8d8d8;transform:scaleX(0.9304);">May 31</div>
<div class="t" style="left:1141.14px;top:729px;font:400 9.81px/9.81px 'Liberation Sans';color:#d8d8d8;transform:scaleX(0.9304);">Jun 14</div>
<div class="t" style="left:1236.80px;top:729px;font:400 9.81px/9.81px 'Liberation Sans';color:#d8d8d8;transform:scaleX(0.9304);">Jun 28</div>
<div class="t" style="left:627.47px;top:740px;font:400 9.81px/9.81px 'Liberation Sans';color:#d8d8d8;transform:scaleX(0.9304);">2024</div>
<div class="t" style="left:1273.05px;top:312px;font:400 10.52px/10.52px 'Liberation Sans';color:#dcdcdc;transform:scaleX(0.8865);">40</div>
<div class="t" style="left:1272.91px;top:398px;font:400 10.52px/10.52px 'Liberation Sans';color:#dcdcdc;transform:scaleX(0.8865);">30</div>
<div class="t" style="left:1272.76px;top:484px;font:400 10.52px/10.52px 'Liberation Sans';color:#dcdcdc;transform:scaleX(0.8865);">20</div>
<div class="t" style="left:1272.62px;top:570px;font:400 10.52px/10.52px 'Liberation Sans';color:#dcdcdc;transform:scaleX(0.8865);">10</div>
<div class="t" style="left:1272.91px;top:656px;font:400 10.52px/10.52px 'Liberation Sans';color:#dcdcdc;transform:scaleX(0.8865);">0</div>
<div class="a" style="left:10.2px;top:294px;width:200.8px;height:52px;background:#141414;border-radius:3px"></div>
<div class="a" style="left:15.3px;top:300px;width:8px;height:8px;background:#f4f4f4;"></div>
<div class="a" style="left:15.3px;top:311px;width:8px;height:8px;background:transparent;border:1.5px dashed #c0601a"></div>
<div class="a" style="left:15.3px;top:321.7px;width:8px;height:8px;background:transparent;border:1.5px dotted #b0b020"></div>
<div class="a" style="left:15.3px;top:332px;width:8px;height:8.4px;background:#e01414;"></div>
<div class="t" style="left:26.13px;top:301px;font:400 9.26px/9.26px 'Liberation Sans';color:#e6e6e6;transform:scaleX(0.9485);">S&amp;P 500 Equal Weighted Index</div>
<div class="t" style="left:25.68px;top:310px;font:400 9.53px/9.53px 'Liberation Sans';color:#e6e6e6;transform:scaleX(0.9641);">Bloomberg Magnificent 7 Price Return Index</div>
<div class="t" style="left:26.14px;top:322px;font:400 9.81px/9.81px 'Liberation Sans';color:#e6e6e6;transform:scaleX(0.8389);">S&amp;P 500 INDEX</div>
<div class="t" style="left:25.74px;top:332px;font:400 9.4px/9.4px 'Liberation Sans';color:#e6e6e6;transform:scaleX(0.9043);">NASDAQ 100 Equal Weighted Index</div>
<div class="a" style="left:574px;top:292px;width:42px;height:12.6px;background:#181818;"></div>
<div class="a" style="left:618px;top:292px;width:54px;height:12.6px;background:#181818;"></div>
<div class="a" style="left:673px;top:292px;width:41.6px;height:12.6px;background:#181818;"></div>
<div class="t" style="left:591.46px;top:294px;font:400 8.31px/8.31px 'Liberation Sans';color:#d8d8d8;transform:scaleX(1.0852);">Track</div>
<div class="t" style="left:635.10px;top:294px;font:400 8.68px/8.68px 'Liberation Sans';color:#d8d8d8;transform:scaleX(0.9889);">Annotate</div>
<div class="t" style="left:689.82px;top:294px;font:400 8.68px/8.68px 'Liberation Sans';color:#d8d8d8;transform:scaleX(1.0300);">Zoom</div>
<svg class="a" style="left:570px;top:290px" width="150" height="16"><g stroke="#9a9a9a" stroke-width="1" fill="none"><path d="M12.3,4.5 V12 M8.6,8.25 H16"/><path d="M10.3,6.3 L14.3,10.2 M14.3,6.3 L10.3,10.2" stroke-width="0"/><path d="M53,12 L59,5.5 M53,12 H59.5"/><circle cx="110.3" cy="7.3" r="2.6"/><path d="M112.2,9.2 L114.8,11.8"/></g></svg>
<div class="a" style="left:3px;top:754px;width:1289px;height:36px;background:#1b1b1b;"></div>
<div class="a" style="left:172.5px;top:754px;width:1.2px;height:36px;background:#0a0a0a;"></div>
<div class="a" style="left:735px;top:754px;width:1.2px;height:36px;background:#0a0a0a;"></div>
<div class="t" style="left:25.16px;top:769px;font:400 13.89px/13.89px 'Liberation Sans';color:#f99f2c;transform:scaleX(1.0153);">Suggested Functions</div>
<div class="t" style="left:188.22px;top:768px;font:700 14.51px/14.51px 'Liberation Sans';color:#ffffff;transform:scaleX(1.0528);">G</div>
<div class="t" style="left:208.82px;top:769px;font:400 13.89px/13.89px 'Liberation Sans';color:#d0d0d0;transform:scaleX(1.0887);">Manage your charts in a central library</div>
<div class="t" style="left:749.01px;top:768px;font:700 14.79px/14.79px 'Liberation Sans';color:#ffffff;transform:scaleX(1.0684);">MRR</div>
<div class="t" style="left:793.89px;top:768px;font:400 14.16px/14.16px 'Liberation Sans';color:#d0d0d0;transform:scaleX(1.0022);">Member Ranked Returns</div>
</body></html>
